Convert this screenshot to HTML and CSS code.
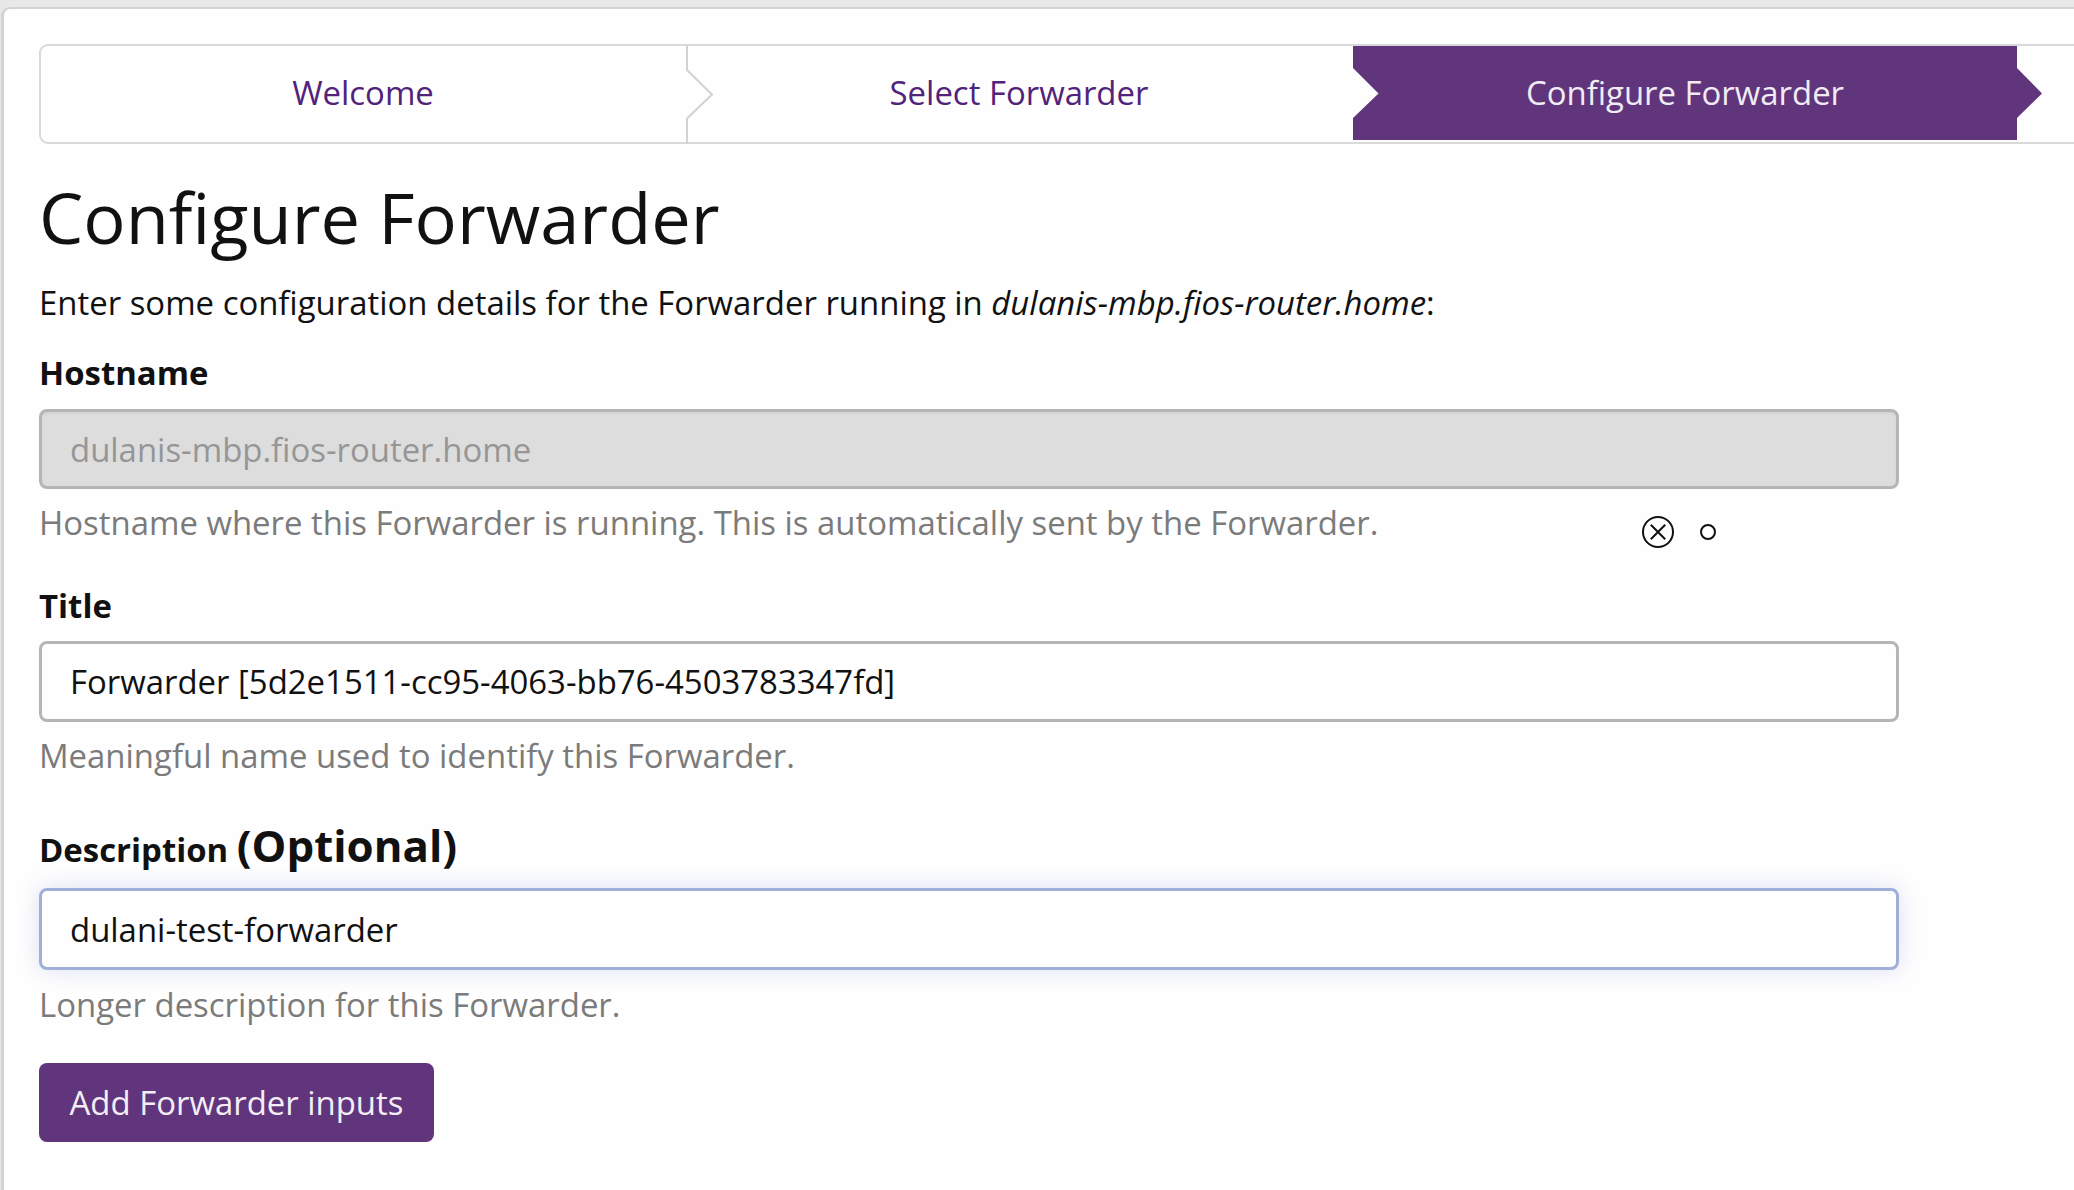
FILE: index.html
```html
<!DOCTYPE html>
<html lang="en">
<head>
<meta charset="utf-8">
<title>Configure Forwarder</title>
<link rel="stylesheet" href="styles.css">
</head>
<body>
<main class="card">
  <nav class="steps">
    <a class="step step-first">Welcome
      <svg class="chevron" width="28" height="98" viewBox="0 0 28 98"><path class="chevron-line" d="M1 0V24L26 48.500L1 72.500V98"/></svg>
    </a>
    <a class="step step-second">Select Forwarder</a>
    <a class="step step-active">Configure Forwarder
      <svg class="notch" width="27" height="94" viewBox="0 0 27 94"><path d="M0 22L25.500 47.500L0 72Z"/></svg>
      <svg class="chevron" width="28" height="94" viewBox="0 0 28 94"><path class="chevron-fill" d="M0 22H1L26 47.500L1 72H0Z"/></svg>
    </a>
    <a class="step step-last"></a>
  </nav>
  <h1 class="title">Configure Forwarder</h1>
  <p class="intro">Enter some configuration details for the Forwarder running in <em>dulanis-mbp.fios-router.home</em>:</p>
  <form class="form">
    <div class="field">
      <label class="label" for="host">Hostname</label>
      <input class="input input-disabled" id="host" value="dulanis-mbp.fios-router.home" disabled>
      <div class="help">
        <span>Hostname where this Forwarder is running. This is automatically sent by the Forwarder.</span>
        <svg class="marks" width="76" height="34" viewBox="0 0 76 34"><circle cx="17" cy="17" r="15"/><path d="M9.800 9.800L24.200 24.200M24.200 9.800L9.800 24.200"/><circle cx="67" cy="17" r="7"/></svg>
      </div>
    </div>
    <div class="field field-title">
      <label class="label" for="name">Title</label>
      <input class="input" id="name" value="Forwarder [5d2e1511-cc95-4063-bb76-4503783347fd]">
      <div class="help"><span>Meaningful name used to identify this Forwarder.</span></div>
    </div>
    <div class="field field-description">
      <label class="label" for="desc">Description <span class="optional">(Optional)</span></label>
      <input class="input input-focus" id="desc" value="dulani-test-forwarder">
      <div class="help"><span>Longer description for this Forwarder.</span></div>
    </div>
    <button class="button" type="button">Add Forwarder inputs</button>
  </form>
</main>
</body>
</html>
```
FILE: styles.css
```css
* { box-sizing: border-box; }
body {
  margin: 0;
  height: 1190px;
  overflow: hidden;
  display: flex;
  padding: 7px 0 0 1px;
  background: #e8e8e8;
  color: #111;
  font: 32.92px/46px "Open Sans", "Noto Sans", sans-serif;
}
.card {
  flex: none;
  width: 2100px;
  height: 1200px;
  padding: 35px 0 0 35px;
  border: solid #d3d3d3;
  border-width: 2px 0 0 3px;
  border-radius: 9px 0 0 0;
  background: #fefefe;
}
.steps {
  display: flex;
  width: 2061px;
  height: 100px;
  border: 2px solid #d9d9d9;
  border-radius: 9px;
}
.step {
  position: relative;
  display: flex;
  align-items: center;
  justify-content: center;
  height: 94px;
  color: #52237a;
}
.step-first { width: 646px; padding-right: 2px; }
.step-second { width: 666px; padding-right: 2px; }
.step-active { width: 664px; background: #60357c; color: #f1ebf4; }
.chevron { position: absolute; left: 100%; top: 0; margin-left: -1px; z-index: 1; }
.chevron-line { fill: none; stroke: #d2d2d2; stroke-width: 2; }
.chevron-fill { fill: #60357c; }
.notch { position: absolute; left: 0; top: 0; fill: #fefefe; }
.title { margin: 28px 0 0; font-size: 70.4px; line-height: 90px; font-weight: 400; }
.intro { margin: 18px 0 0; }
.form { margin-top: 24px; width: 1860px; }
.field { display: flex; flex-direction: column; }
.field-title { margin-top: 37px; }
.field-description { margin-top: 48px; }
.label { height: 46px; font-weight: 700; white-space: nowrap; }
.optional { font-size: 43.8px; line-height: 0; }
.input {
  height: 80px;
  margin-top: 13px;
  padding: 0 28px;
  border: 3px solid #b5b5b5;
  border-radius: 8px;
  background: #fefefe;
  color: #111;
  font: inherit;
}
.field-title .input { height: 81px; margin-top: 12px; }
.input-disabled { background: #ddd; color: #969696; box-shadow: inset 0 2px 3px rgba(0, 0, 0, .05); }
.input-focus { height: 82px; margin-top: 15px; border-color: #a0afd8; box-shadow: 0 0 22px rgba(100, 120, 200, .22); }
.help {
  display: flex;
  justify-content: space-between;
  align-items: center;
  height: 46px;
  margin-top: 11px;
  padding-right: 182px;
  color: #7b7b7b;
}
.field-description .help { margin-top: 12px; }
.marks { fill: none; stroke: #111; stroke-width: 2; position: relative; top: 9px; }
.button {
  display: block;
  width: 395px;
  height: 79px;
  margin-top: 35px;
  padding: 0;
  border: 0;
  border-radius: 8px;
  background: #60357c;
  color: #f3eef6;
  font: inherit;
}
```
